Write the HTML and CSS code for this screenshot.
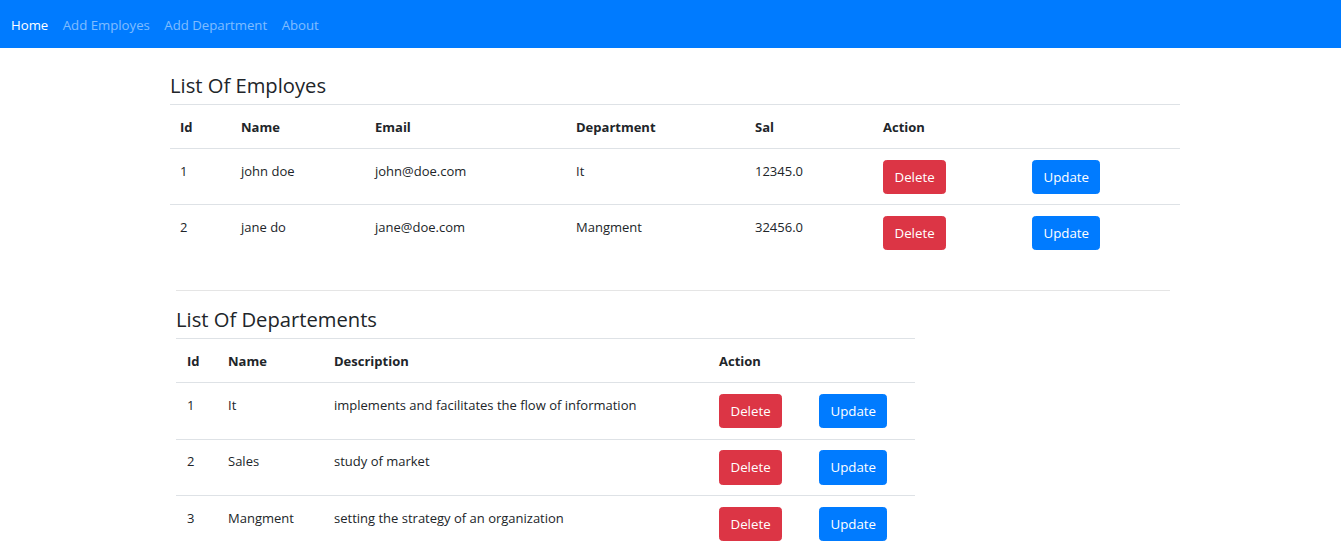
FILE: index.html
```html
<!DOCTYPE html>
<html lang="en">
<head>
<meta charset="utf-8">
<title>Employees</title>
<link rel="stylesheet" href="styles.css">
</head>
<body>
<nav class="navbar">
  <a class="nav-link active" href="#">Home</a>
  <a class="nav-link" href="#">Add Employes</a>
  <a class="nav-link" href="#">Add Department</a>
  <a class="nav-link" href="#">About</a>
</nav>

<main class="page">
  <section class="block block-emp">
    <h4 class="title">List Of Employes</h4>
    <table class="table table-emp">
      <colgroup>
        <col style="width:60px"><col style="width:135px"><col style="width:201px"><col style="width:179px"><col style="width:128px"><col style="width:149px"><col style="width:158px">
      </colgroup>
      <thead>
        <tr><th>Id</th><th>Name</th><th>Email</th><th>Department</th><th>Sal</th><th>Action</th><th></th></tr>
      </thead>
      <tbody>
        <tr><td>1</td><td>john doe</td><td>john@doe.com</td><td>It</td><td>12345.0</td><td><button class="btn btn-danger">Delete</button></td><td><button class="btn btn-primary">Update</button></td></tr>
        <tr><td>2</td><td>jane do</td><td>jane@doe.com</td><td>Mangment</td><td>32456.0</td><td><button class="btn btn-danger">Delete</button></td><td><button class="btn btn-primary">Update</button></td></tr>
      </tbody>
    </table>
  </section>

  <hr class="divider">

  <section class="block block-dep">
    <h4 class="title">List Of Departements</h4>
    <table class="table table-dep">
      <colgroup>
        <col style="width:41px"><col style="width:106px"><col style="width:385px"><col style="width:100px"><col style="width:107px">
      </colgroup>
      <thead>
        <tr><th>Id</th><th>Name</th><th>Description</th><th>Action</th><th></th></tr>
      </thead>
      <tbody>
        <tr><td>1</td><td>It</td><td>implements and facilitates the flow of information</td><td><button class="btn btn-danger">Delete</button></td><td><button class="btn btn-primary">Update</button></td></tr>
        <tr><td>2</td><td>Sales</td><td>study of market</td><td><button class="btn btn-danger">Delete</button></td><td><button class="btn btn-primary">Update</button></td></tr>
        <tr><td>3</td><td>Mangment</td><td>setting the strategy of an organization</td><td><button class="btn btn-danger">Delete</button></td><td><button class="btn btn-primary">Update</button></td></tr>
      </tbody>
    </table>
  </section>
</main>
</body>
</html>
```

FILE: styles.css
```css
* { box-sizing: border-box; }

html, body {
  margin: 0;
  padding: 0;
  background: #fff;
}

body {
  font-family: "Open Sans", "Noto Sans", "Liberation Sans", sans-serif;
  font-size: 13px;
  line-height: 21px;
  color: #212529;
}

.navbar {
  display: flex;
  align-items: center;
  height: 48px;
  background: #007bff;
  padding: 2px 4px 0;
}

.nav-link {
  padding: 0 7px;
  font-size: 13.2px;
  color: rgba(255, 255, 255, 0.5);
  text-decoration: none;
  line-height: 21px;
}

.nav-link + .nav-link {
  margin-left: 0.5px;
}

.nav-link.active {
  color: #fff;
}

.page {
  display: flex;
  flex-direction: column;
}

.block-emp {
  margin: 25px 0 0 170px;
  width: 1010px;
}

.block-dep {
  margin: 0 0 0 176px;
  width: 739px;
}

.title {
  margin: 0 0 6px;
  font-size: 20.2px;
  font-weight: 400;
  line-height: 25px;
  color: #212529;
}

.divider {
  margin: 16px 0 16px 176px;
  width: 994px;
  border: 0;
  border-top: 1px solid #e5e5e5;
  height: 0;
}

.table {
  width: 100%;
  border-collapse: collapse;
  table-layout: fixed;
  margin-bottom: 14px;
}

.table th,
.table td {
  padding: 10.5px 10px 10px;
  text-align: left;
  vertical-align: top;
  border-top: 1px solid #dee2e6;
  white-space: nowrap;
}

.table th {
  font-weight: 700;
  padding-top: 11.5px;
  padding-bottom: 10.5px;
  line-height: 21px;
}

.table td {
  line-height: 23px;
}

.table-emp th:nth-child(2),
.table-emp td:nth-child(2) {
  padding-left: 11px;
}

.table-dep th,
.table-dep td {
  padding-left: 11px;
}

.table-dep td {
  padding-bottom: 10.5px;
}

.btn {
  display: inline-block;
  height: 34.5px;
  padding: 0 10.5px;
  border: 1px solid transparent;
  border-radius: 3.5px;
  font-family: inherit;
  font-size: 13.3px;
  line-height: 32px;
  color: #fff;
  cursor: pointer;
  vertical-align: top;
}

.btn-danger {
  background: #dc3545;
  border-color: #dc3545;
  width: 63px;
}

.btn-primary {
  background: #007bff;
  border-color: #007bff;
  width: 68px;
}
```
